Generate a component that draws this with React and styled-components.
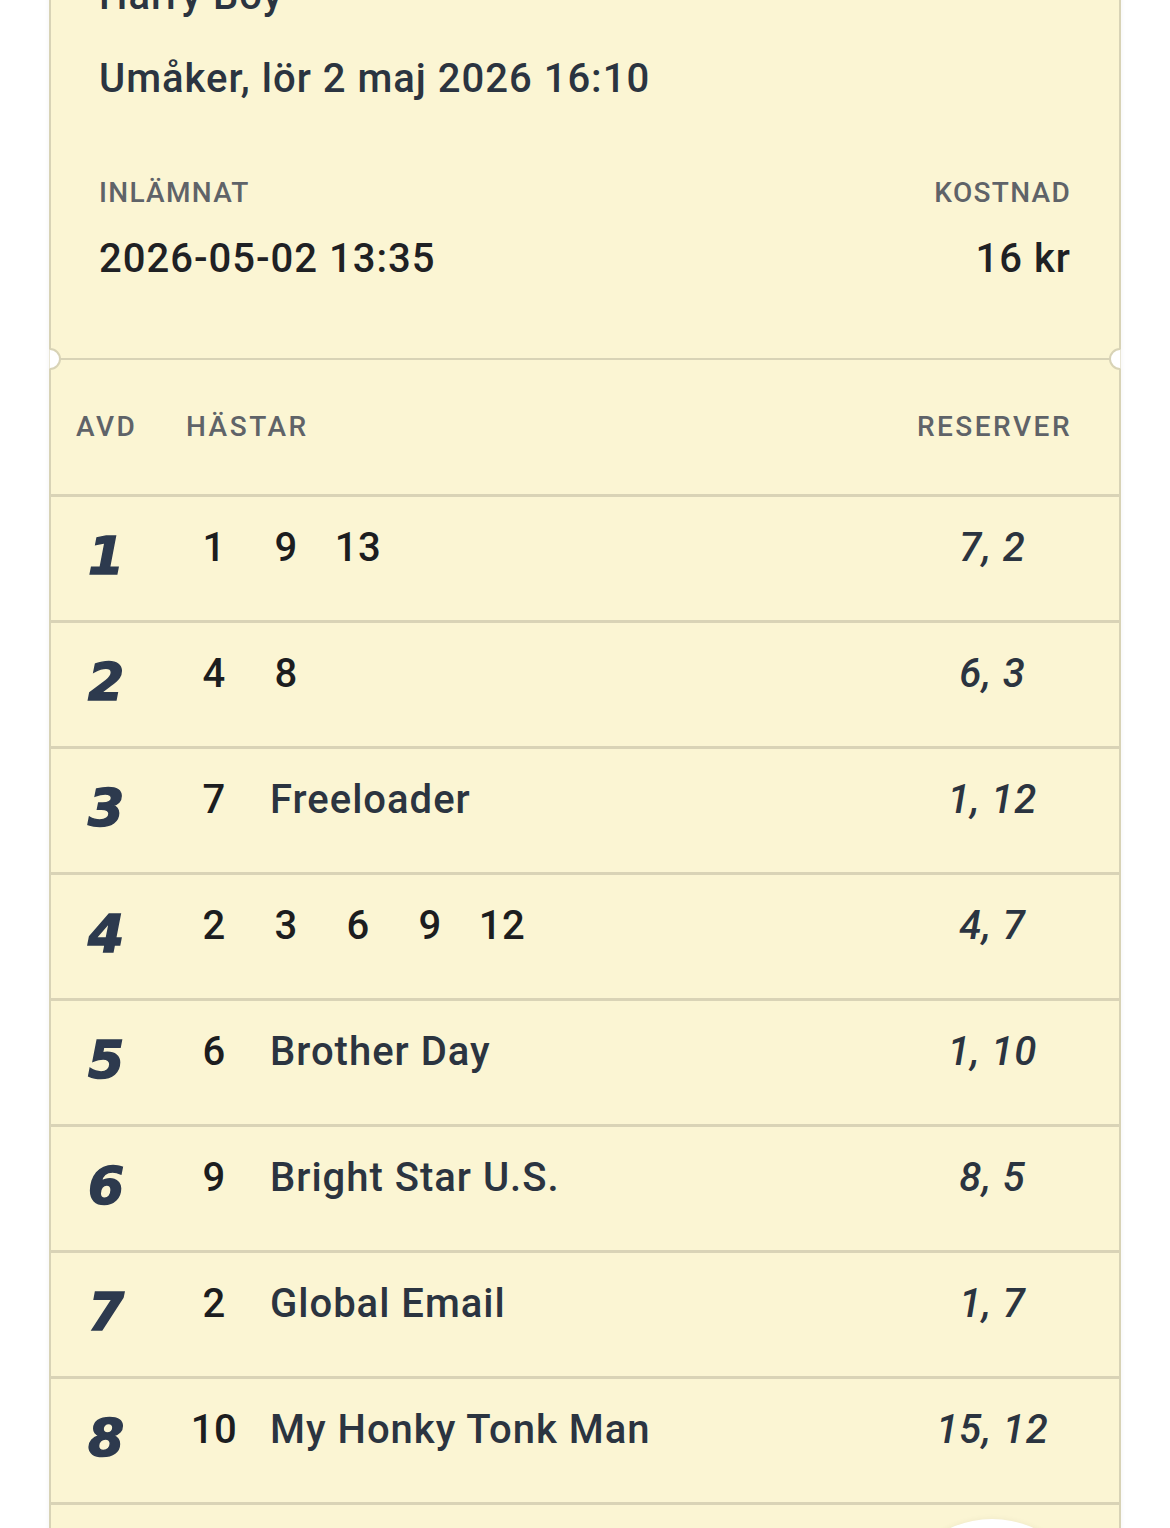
import React from "react";
import styled, { createGlobalStyle } from "styled-components";

const GlobalStyle = createGlobalStyle`
  * {
    box-sizing: border-box;
  }

  body {
    margin: 0;
    background: #ffffff;
    font-family: Roboto, "Liberation Sans", sans-serif;
  }
`;

const Page = styled.div`
  position: relative;
  height: 1528px;
  overflow: hidden;
  padding: 0 49px;
`;

const Card = styled.section`
  width: 1072px;
  margin-top: -68px;
  background-color: #fbf5d3;
  border: 2px solid #d8d3b6;
  border-top: none;
  box-shadow: 0 0 6px rgba(0, 0, 0, 0.05);
`;

const Top = styled.div`
  position: relative;
  padding: 40px 48px 75px;
  border-bottom: 2px solid #d8d3b6;
`;

const Title = styled.h1`
  margin: 0;
  font-size: 40px;
  font-weight: 500;
  line-height: 48px;
  letter-spacing: 1px;
  color: #2b3440;
`;

const Subtitle = styled.p`
  margin: 35px 0 0;
  font-size: 40px;
  font-weight: 500;
  line-height: 48px;
  letter-spacing: 1px;
  color: #2b3440;
`;

const Meta = styled.div`
  display: flex;
  justify-content: space-between;
  margin-top: 73px;
`;

const MetaItem = styled.div`
  display: flex;
  flex-direction: column;
  align-items: ${(p) => (p.$right ? "flex-end" : "flex-start")};
`;

const Label = styled.span`
  font-size: 28px;
  font-weight: 500;
  line-height: 34px;
  letter-spacing: 1.3px;
  color: #5f6368;
`;

const Value = styled.span`
  margin-top: 25px;
  font-size: 40px;
  font-weight: 500;
  line-height: 48px;
  letter-spacing: 1px;
  color: #1f2124;
`;

const Notch = styled.span`
  position: absolute;
  bottom: -12px;
  ${(p) => (p.$side === "left" ? "left: -12px;" : "right: -12px;")}
  width: 22px;
  height: 22px;
  border-radius: 50%;
  background: #ffffff;
  border: 2px solid #d8d3b6;
  clip-path: ${(p) =>
    p.$side === "left" ? "inset(0 0 0 48%)" : "inset(0 48% 0 0)"};
`;

const Grid = styled.div`
  display: grid;
  grid-template-columns: 60px 1fr 155px;
  column-gap: 50px;
  padding: 0 49px 0 25px;
`;

const HeadRow = styled(Grid)`
  height: 134px;
  align-items: center;
`;

const HeadCell = styled.span`
  font-size: 28px;
  font-weight: 500;
  line-height: 34px;
  letter-spacing: 2.5px;
  color: #5f6368;
  text-align: ${(p) => p.$align || "left"};
  margin-right: ${(p) => (p.$align === "right" ? "-2px" : "0")};
`;

const Row = styled(Grid)`
  height: 126px;
  border-top: 3px solid #d9d3b6;
  align-items: start;
  padding-top: 27px;
`;

const Avd = styled.span`
  margin-top: 8px;
  font-family: "DejaVu Sans", sans-serif;
  font-size: 52px;
  font-weight: 700;
  font-style: italic;
  line-height: 48px;
  text-align: center;
  color: #2d3a4e;
  -webkit-text-stroke: 1.5px #2d3a4e;
`;

const Horses = styled.div`
  display: flex;
  gap: ${(p) => (p.$single ? "28px" : "16px")};
`;

const Num = styled.span`
  width: 56px;
  text-align: center;
  font-size: 40px;
  font-weight: 500;
  line-height: 48px;
  letter-spacing: 0.5px;
  color: #1c1d1f;
`;

const Name = styled.span`
  font-size: 40px;
  font-weight: 500;
  line-height: 48px;
  letter-spacing: 1px;
  color: #2b3440;
  white-space: nowrap;
`;

const Reserve = styled.span`
  font-size: 40px;
  font-weight: 500;
  font-style: italic;
  line-height: 48px;
  letter-spacing: 1px;
  text-align: center;
  color: #2b3440;
`;

const Fab = styled.div`
  position: absolute;
  left: 892px;
  top: 1519px;
  width: 200px;
  height: 200px;
  border-radius: 50%;
  background: #ffffff;
  box-shadow: 0 0 6px rgba(0, 0, 0, 0.06);
`;

const legs = [
  { avd: "1", horses: ["1", "9", "13"], reserves: "7, 2" },
  { avd: "2", horses: ["4", "8"], reserves: "6, 3" },
  { avd: "3", horses: ["7"], name: "Freeloader", reserves: "1, 12" },
  { avd: "4", horses: ["2", "3", "6", "9", "12"], reserves: "4, 7" },
  { avd: "5", horses: ["6"], name: "Brother Day", reserves: "1, 10" },
  { avd: "6", horses: ["9"], name: "Bright Star U.S.", reserves: "8, 5" },
  { avd: "7", horses: ["2"], name: "Global Email", reserves: "1, 7" },
  { avd: "8", horses: ["10"], name: "My Honky Tonk Man", reserves: "15, 12" },
];

const App = () => {
  return (
    <Page>
      <GlobalStyle />
      <Card>
        <Top>
          <Title>Harry Boy</Title>
          <Subtitle>Umåker, lör 2 maj 2026 16:10</Subtitle>
          <Meta>
            <MetaItem>
              <Label>INLÄMNAT</Label>
              <Value>2026-05-02 13:35</Value>
            </MetaItem>
            <MetaItem $right>
              <Label>KOSTNAD</Label>
              <Value>16 kr</Value>
            </MetaItem>
          </Meta>
          <Notch $side="left" />
          <Notch $side="right" />
        </Top>

        <HeadRow>
          <HeadCell>AVD</HeadCell>
          <HeadCell>HÄSTAR</HeadCell>
          <HeadCell $align="right">RESERVER</HeadCell>
        </HeadRow>

        {legs.map((leg) => (
          <Row key={leg.avd}>
            <Avd>{leg.avd}</Avd>
            <Horses $single={!!leg.name}>
              {leg.horses.map((h) => (
                <Num key={h}>{h}</Num>
              ))}
              {leg.name && <Name>{leg.name}</Name>}
            </Horses>
            <Reserve>{leg.reserves}</Reserve>
          </Row>
        ))}
        <Row />
      </Card>
      <Fab />
    </Page>
  );
};

export default App;
